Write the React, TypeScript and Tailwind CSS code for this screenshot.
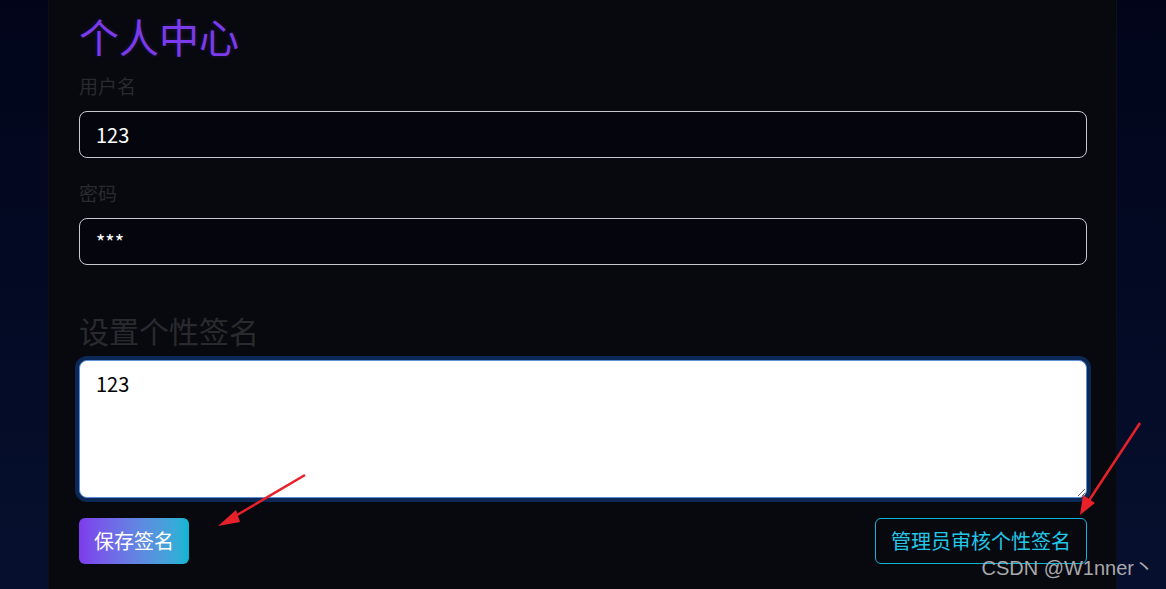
import React from "react";

const cjk = { fontFamily: '"Noto Sans CJK SC", "Noto Sans", sans-serif' };

function Field({ label, value }: { label: string; value: string }) {
  return (
    <div className="flex flex-col">
      <label className="text-[19px] leading-[28px] text-[#2a2a2e]">{label}</label>
      <div className="mt-[11px] flex h-[47px] items-center rounded-lg border border-[#c8c8d0] bg-[#05060d] px-4 text-[20px] text-white">
        {value}
      </div>
    </div>
  );
}

export default function App() {
  return (
    <div
      className="relative flex h-[589px] w-full overflow-hidden bg-gradient-to-b from-[#02051a] to-[#06102e]"
      style={cjk}
    >
      <div className="w-[48px] shrink-0" />
      <main className="flex w-[1069px] shrink-0 flex-col border-x border-[#0c0f1c] bg-[#07090f] pl-[30px] pr-[29px] pt-[8px]">
        <h1 className="text-[40px] leading-[56px] text-[#7c3aed] [text-shadow:0_0_4px_rgba(124,58,237,0.25)]">
          个人中心
        </h1>
        <div className="mt-[8px] flex flex-col gap-[21px]">
          <Field label="用户名" value="123" />
          <Field label="密码" value="***" />
        </div>
        <h2 className="mt-[45px] text-[30px] leading-[40px] text-[#2a2a2e]">设置个性签名</h2>
        <textarea
          readOnly
          defaultValue="123"
          className="mt-[10px] h-[138px] w-full rounded-lg border border-[#5d8fd6] bg-white px-4 py-[8px] text-[20px] text-black outline-none ring-4 ring-[#0b2857]"
        />
        <div className="mt-[20px] flex items-center justify-between">
          <button className="h-[46px] rounded-md bg-gradient-to-r from-[#7c3aed] to-[#06b6d4] px-[15px] text-[20px] text-white">
            保存签名
          </button>
          <button className="h-[46px] rounded-md border border-[#0fb5d8] px-[15px] text-[20px] text-[#22c7e8]">
            管理员审核个性签名
          </button>
        </div>
      </main>
      <div className="flex-1" />

      <svg className="pointer-events-none absolute inset-0" width="1166" height="589">
        <g stroke="#e8202a" strokeWidth="2.5" fill="#e8202a">
          <line x1="305" y1="475" x2="232" y2="518" />
          <polygon points="218,526 236,510 240,522" stroke="none" />
          <line x1="1140" y1="423" x2="1088" y2="502" />
          <polygon points="1080,515 1083,495 1095,503" stroke="none" />
        </g>
      </svg>
      <div
        className="absolute right-[12px] top-[555px] text-[20px] leading-[26px] text-[#a8a8ac]"
        style={{ fontFamily: '"Liberation Sans", "Noto Sans CJK SC", sans-serif' }}
      >
        CSDN @W1nner丶
      </div>
    </div>
  );
}
